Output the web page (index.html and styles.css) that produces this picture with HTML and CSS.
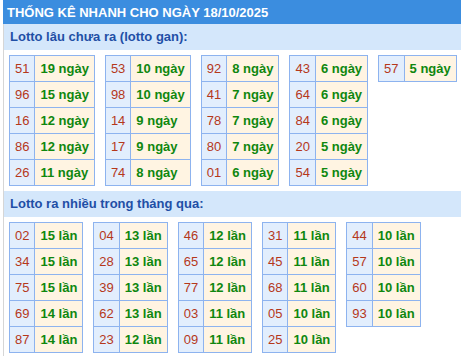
FILE: index.html
```html
<!DOCTYPE html>
<html lang="vi">
<head>
<meta charset="utf-8">
<title>Thống kê nhanh</title>
<link rel="stylesheet" href="styles.css">
</head>
<body>
<div class="box">
  <div class="head">THỐNG KÊ NHANH CHO NGÀY 18/10/2025</div>
  <div class="band">Lotto lâu chưa ra (lotto gan):</div>
  <div class="tables">
    <table><tr><td class="n">51</td><td class="v">19 ngày</td></tr><tr><td class="n">96</td><td class="v">15 ngày</td></tr><tr><td class="n">16</td><td class="v">12 ngày</td></tr><tr><td class="n">86</td><td class="v">12 ngày</td></tr><tr><td class="n">26</td><td class="v">11 ngày</td></tr></table>
    <table><tr><td class="n">53</td><td class="v">10 ngày</td></tr><tr><td class="n">98</td><td class="v">10 ngày</td></tr><tr><td class="n">14</td><td class="v">9 ngày</td></tr><tr><td class="n">17</td><td class="v">9 ngày</td></tr><tr><td class="n">74</td><td class="v">8 ngày</td></tr></table>
    <table><tr><td class="n">92</td><td class="v">8 ngày</td></tr><tr><td class="n">41</td><td class="v">7 ngày</td></tr><tr><td class="n">78</td><td class="v">7 ngày</td></tr><tr><td class="n">80</td><td class="v">7 ngày</td></tr><tr><td class="n">01</td><td class="v">6 ngày</td></tr></table>
    <table><tr><td class="n">43</td><td class="v">6 ngày</td></tr><tr><td class="n">64</td><td class="v">6 ngày</td></tr><tr><td class="n">84</td><td class="v">6 ngày</td></tr><tr><td class="n">20</td><td class="v">5 ngày</td></tr><tr><td class="n">54</td><td class="v">5 ngày</td></tr></table>
    <table><tr><td class="n">57</td><td class="v">5 ngày</td></tr></table>
  </div>
  <div class="band">Lotto ra nhiều trong tháng qua:</div>
  <div class="tables">
    <table><tr><td class="n">02</td><td class="v">15 lần</td></tr><tr><td class="n">34</td><td class="v">15 lần</td></tr><tr><td class="n">75</td><td class="v">15 lần</td></tr><tr><td class="n">69</td><td class="v">14 lần</td></tr><tr><td class="n">87</td><td class="v">14 lần</td></tr></table>
    <table><tr><td class="n">04</td><td class="v">13 lần</td></tr><tr><td class="n">28</td><td class="v">13 lần</td></tr><tr><td class="n">39</td><td class="v">13 lần</td></tr><tr><td class="n">62</td><td class="v">13 lần</td></tr><tr><td class="n">23</td><td class="v">12 lần</td></tr></table>
    <table><tr><td class="n">46</td><td class="v">12 lần</td></tr><tr><td class="n">65</td><td class="v">12 lần</td></tr><tr><td class="n">77</td><td class="v">12 lần</td></tr><tr><td class="n">03</td><td class="v">11 lần</td></tr><tr><td class="n">09</td><td class="v">11 lần</td></tr></table>
    <table><tr><td class="n">31</td><td class="v">11 lần</td></tr><tr><td class="n">45</td><td class="v">11 lần</td></tr><tr><td class="n">68</td><td class="v">11 lần</td></tr><tr><td class="n">05</td><td class="v">10 lần</td></tr><tr><td class="n">25</td><td class="v">10 lần</td></tr></table>
    <table><tr><td class="n">44</td><td class="v">10 lần</td></tr><tr><td class="n">57</td><td class="v">10 lần</td></tr><tr><td class="n">60</td><td class="v">10 lần</td></tr><tr><td class="n">93</td><td class="v">10 lần</td></tr></table>
  </div>
</div>
</body>
</html>
```
FILE: styles.css
```css
html, body {
  margin: 0;
  padding: 0;
  background: #fff;
}
body {
  font-family: "Liberation Sans", Arial, sans-serif;
  font-size: 13px;
}
.box {
  margin-left: 3px;
  border-left: 1px solid #d6d6d6;
  min-height: 356px;
}
.head {
  background: #3b8ddf;
  color: #fff;
  font-weight: bold;
  font-size: 13px;
  height: 24px;
  line-height: 25px;
  padding-left: 4px;
  margin-left: -1px;
}
.band {
  background: #d4e7fb;
  color: #1f4fa6;
  font-weight: bold;
  font-size: 13px;
  height: 26px;
  line-height: 26px;
  padding-left: 6px;
}
.tables {
  display: flex;
  align-items: flex-start;
  gap: 10px;
  padding: 5px 5px;
}
table {
  border-collapse: collapse;
}
td {
  border: 1px solid #8db3ef;
  height: 26px;
  padding: 0 5px;
  font-size: 13px;
  line-height: 15px;
  white-space: nowrap;
  box-sizing: border-box;
}
td.n {
  background: #e2eefd;
  color: #b5381b;
  text-align: center;
  padding: 0 5px;
}
td.v {
  background: #fff4e2;
  color: #0f870f;
  font-weight: bold;
  padding: 0 5px;
}
```
